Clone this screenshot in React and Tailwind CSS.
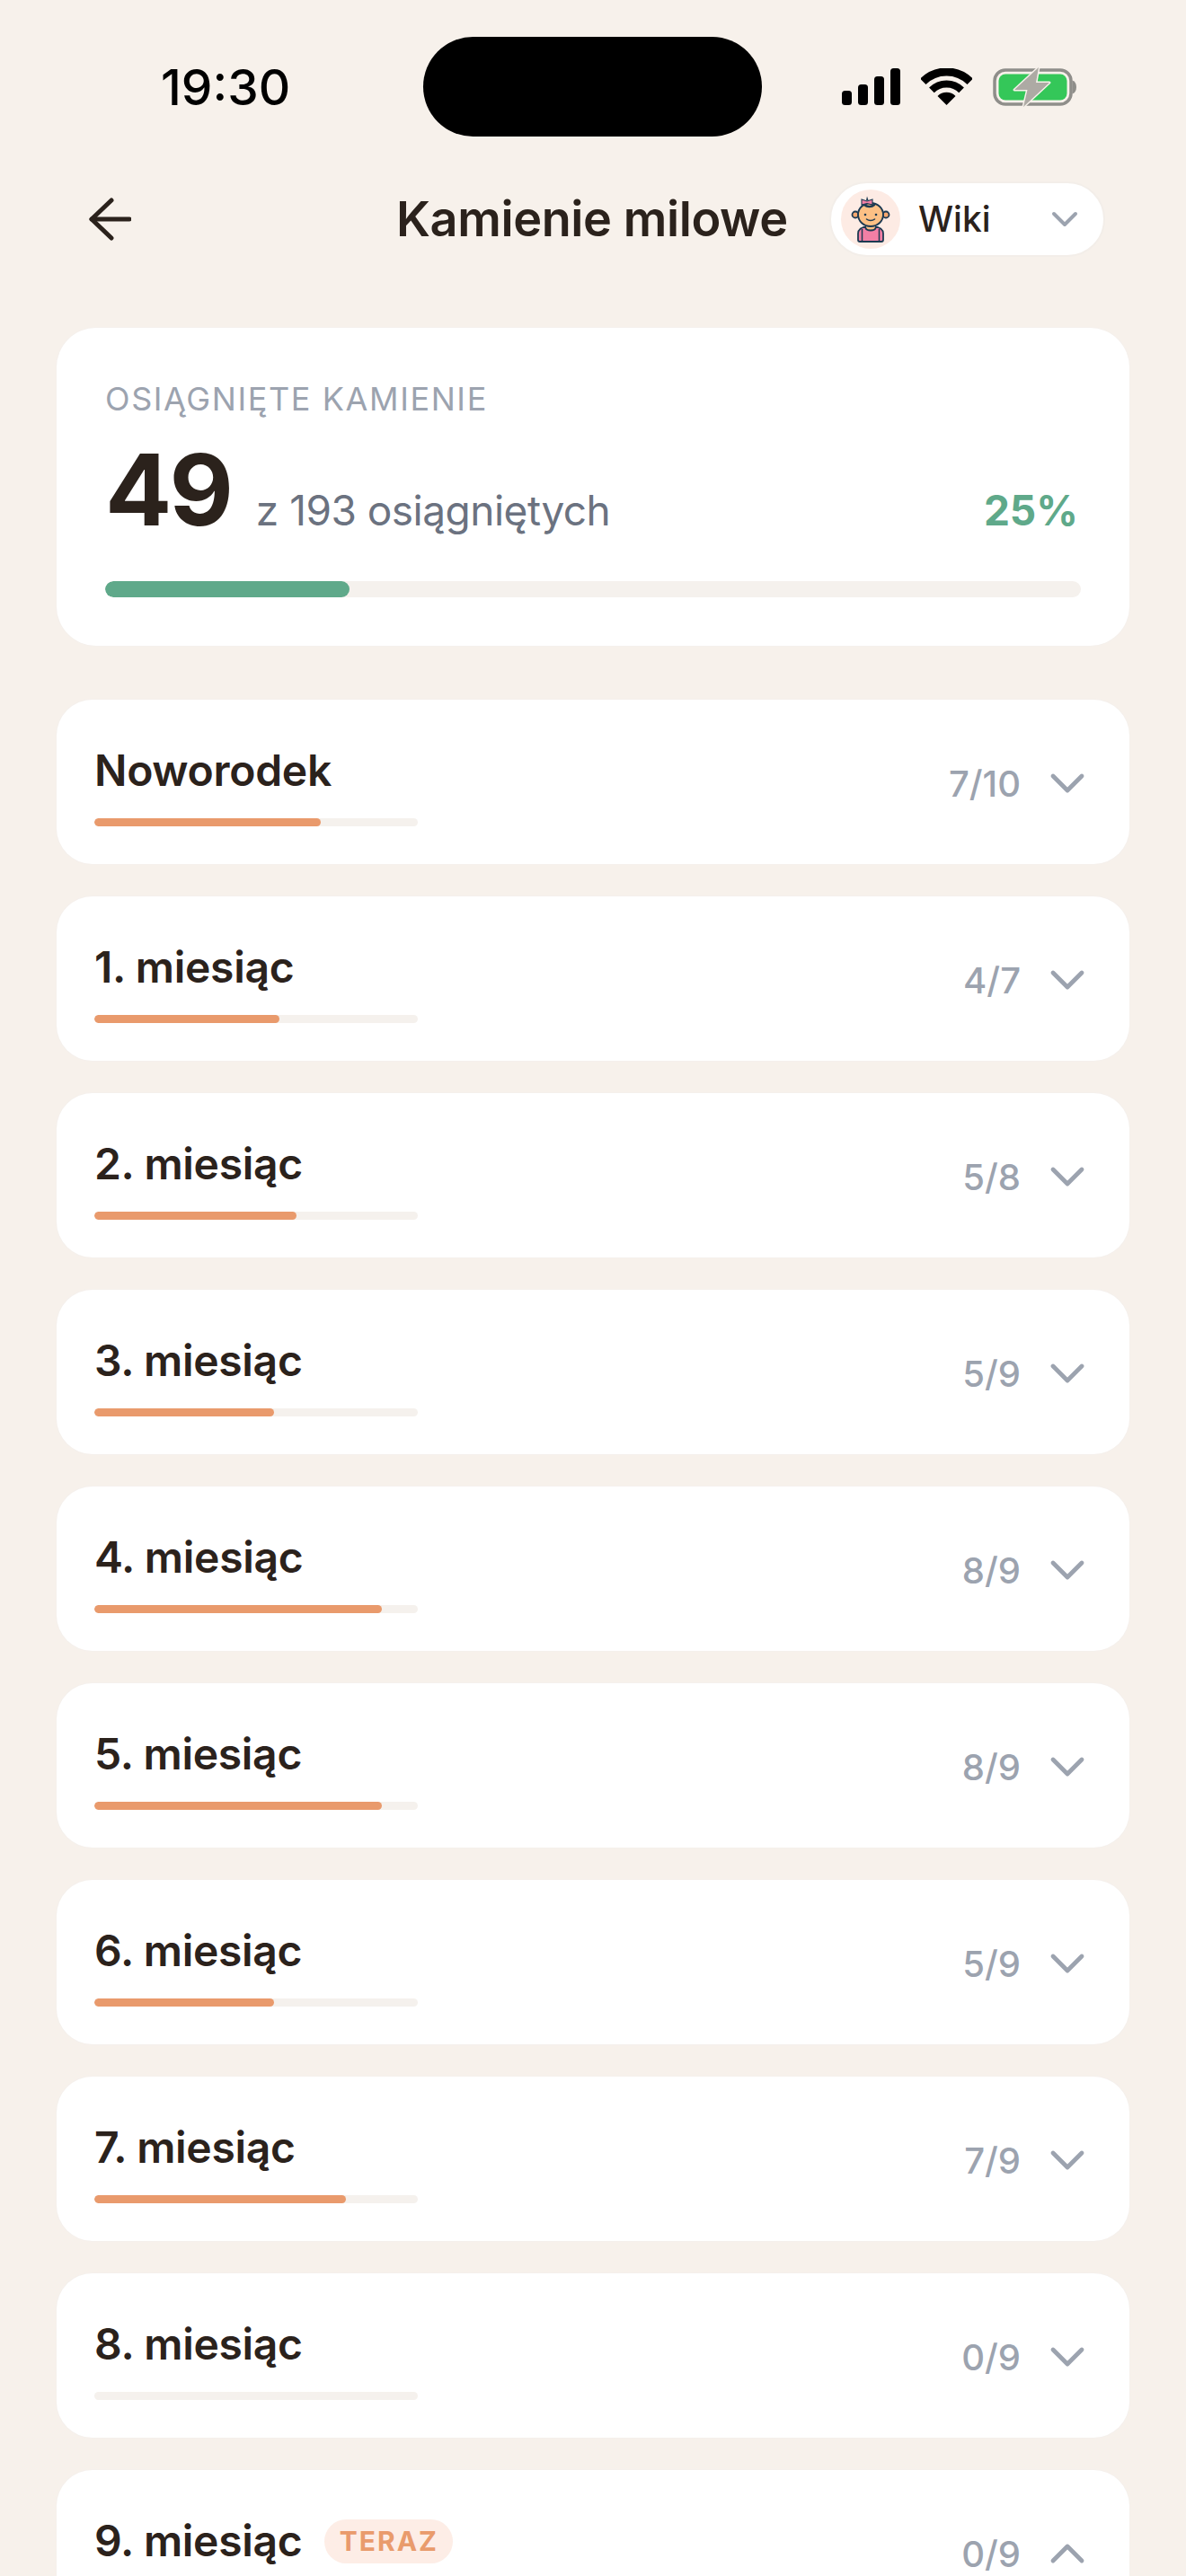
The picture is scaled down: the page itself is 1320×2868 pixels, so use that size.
import { ChevronDown, ChevronUp } from 'lucide-react';

const rows = [
    { title: 'Noworodek', done: 7, total: 10 },
    { title: '1. miesiąc', done: 4, total: 7 },
    { title: '2. miesiąc', done: 5, total: 8 },
    { title: '3. miesiąc', done: 5, total: 9 },
    { title: '4. miesiąc', done: 8, total: 9 },
    { title: '5. miesiąc', done: 8, total: 9 },
    { title: '6. miesiąc', done: 5, total: 9 },
    { title: '7. miesiąc', done: 7, total: 9 },
    { title: '8. miesiąc', done: 0, total: 9 },
    { title: '9. miesiąc', done: 0, total: 9, now: true },
];

function StatusIcons() {
    return (
        <div className="flex items-center ml-[89px] text-black">
            <svg width="65" height="41" viewBox="0 0 65 41" fill="currentColor">
                <rect x="0" y="25" width="11" height="16" rx="3.5" />
                <rect x="18" y="18" width="11" height="23" rx="3.5" />
                <rect x="36" y="9" width="11" height="32" rx="3.5" />
                <rect x="54" y="0" width="11" height="41" rx="3.5" />
            </svg>
            <svg className="ml-[23px]" width="57" height="42" viewBox="0 0 57 42" fill="none">
                <path d="M2.3 14.8A37 37 0 0 1 54.7 14.8" stroke="currentColor" strokeWidth="9" />
                <path d="M11.9 24.4A23.5 23.5 0 0 1 45.1 24.4" stroke="currentColor" strokeWidth="8" />
                <path d="M28.5 41L18.5 31A14 14 0 0 1 38.5 31Z" fill="currentColor" />
            </svg>
            <svg className="ml-[23px] overflow-visible" width="93" height="44" viewBox="0 0 93 44" fill="none">
                <rect x="2" y="3" width="85" height="38" rx="12" stroke="#8f8e8a" strokeWidth="3.5" />
                <rect x="6.5" y="7.5" width="76" height="29" rx="7.5" fill="#34c759" />
                <path d="M88.5 14.5c3 1 4.5 4 4.5 7.5s-1.500 6.500-4.500 7.500z" fill="#8f8e8a" />
                <path
                    d="M51 0L24 25H38.500L34 44L63 17H48Z"
                    fill="#adaaa4"
                    stroke="#f7f1eb"
                    strokeWidth="3"
                    strokeLinejoin="round"
                    paintOrder="stroke"
                />
            </svg>
        </div>
    );
}

function BabyAvatar() {
    return (
        <svg width="66" height="66" viewBox="0 0 66 66" fill="none" className="shrink-0">
            <circle cx="33" cy="33" r="33" fill="#fdebe4" />
            <path d="M19 56V49c0-4 3-6 6-7h16c3 1 6 3 6 7v7a2 2 0 0 1-2 2H21a2 2 0 0 1-2-2Z" fill="#f27fa5" stroke="#1d3a52" strokeWidth="1.800" />
            <path d="M27 41c0 3 2.500 4.500 6 4.500s6-1.500 6-4.500" fill="#fcc085" stroke="#1d3a52" strokeWidth="1.800" />
            <path d="M23.500 44v14M42.500 44v14" stroke="#1d3a52" strokeWidth="1.500" />
            <circle cx="16" cy="28" r="3.500" fill="#f6a86f" stroke="#1d3a52" strokeWidth="1.800" />
            <circle cx="50" cy="28" r="3.500" fill="#f6a86f" stroke="#1d3a52" strokeWidth="1.800" />
            <ellipse cx="33" cy="28" rx="14" ry="13" fill="#fcc085" stroke="#1d3a52" strokeWidth="1.900" />
            <path d="M26 17c3 2.500 8 3 11 0" stroke="#1d3a52" strokeWidth="2.500" strokeLinecap="round" />
            <path d="M23 11l6 2 6-2v6l-6-1.500-6 1.500z" fill="#f27fa5" stroke="#1d3a52" strokeWidth="1.100" />
            <path d="M28 12l1-4.500 1.500 4.500z" fill="#1d3a52" />
            <circle cx="27" cy="28" r="1.300" fill="#1d3a52" />
            <circle cx="39" cy="28" r="1.300" fill="#1d3a52" />
            <path d="M28.500 33c2.500 2 6.500 2 9 0" stroke="#1d3a52" strokeWidth="1.600" strokeLinecap="round" />
        </svg>
    );
}

function Row({ title, done, total, now }) {
    const Chevron = now ? ChevronUp : ChevronDown;
    return (
        <div className="bg-white rounded-[40px] h-[183px] shrink-0 flex justify-between pl-[42px] pr-[37px] shadow-[0_0_0_1px_#f5f0ec]">
            <div className="pt-[50px]">
                <div className="flex items-center h-[58px] gap-[25px]">
                    <span className="text-[48px] leading-[58px] font-semibold text-[#2b221c] tracking-[-0.3px]">{title}</span>
                    {now && (
                        <span className="h-[49px] w-[143px] rounded-full bg-[#fdede6] flex items-center justify-center text-[30px] font-bold tracking-[2px] text-[#e99b6c]">
                            TERAZ
                        </span>
                    )}
                </div>
                <div className="mt-[24px] w-[360px] h-[9px] rounded-full bg-[#f5f1ed] overflow-hidden">
                    <div className="h-full rounded-full bg-[#e99a6c]" style={{ width: `${(done / total) * 100}%` }} />
                </div>
            </div>
            <div className="flex items-center gap-[20px] pt-[2px]">
                <span className="mt-[2px] text-[40px] font-medium text-[#9ca3af]">{done}/{total}</span>
                <Chevron strokeWidth={1.8} className="w-16 h-16 text-[#9ca3af]" />
            </div>
        </div>
    );
}

export default function App() {
    return (
        <div className="h-[2868px] overflow-hidden bg-[#f7f1eb] font-['Inter',sans-serif]">
            <div className="flex items-center pt-[41px]">
                <div className="w-[471px] pl-[179px] text-[55px] leading-[60px] font-medium text-black">19:30</div>
                <div className="w-[377px] h-[111px] rounded-full bg-black" />
                <StatusIcons />
            </div>

            <div className="flex items-center mt-[50px] h-[84px] pl-[99px]">
                <svg width="47" height="48" viewBox="0 0 47 48" fill="none" stroke="#2b221c" strokeWidth="5" strokeLinecap="round" strokeLinejoin="round" className="shrink-0">
                    <path d="M45 24H3" />
                    <path d="M25 3L3 24L25 45" />
                </svg>
                <h1 className="ml-[295px] w-[436px] shrink-0 text-[54px] leading-[64px] font-semibold tracking-[-0.4px] text-[#2b221c] whitespace-nowrap">Kamienie milowe</h1>
                <div className="ml-[46px] w-[307px] h-[84px] shrink-0 rounded-full bg-white border-2 border-[#f3eee9] flex items-center pl-[11px]">
                    <BabyAvatar />
                    <span className="ml-[20px] text-[39px] font-medium text-[#2b221c]">Wiki</span>
                    <ChevronDown className="ml-auto mr-[19px] w-12 h-12 text-[#9ca3af]" />
                </div>
            </div>

            <div className="px-[63px] mt-[79px] flex flex-col">
                <div className="bg-white rounded-[44px] h-[354px] px-[54px] pt-[57px] shadow-[0_0_0_1px_#f5f0ec]">
                    <div className="text-[36px] leading-[44px] tracking-[1.6px] text-[#9ca3af]">OSIĄGNIĘTE KAMIENIE</div>
                    <div className="flex items-baseline justify-between mt-[24px] pr-[3px]">
                        <div className="flex items-baseline gap-[28px]">
                            <span className="text-[110px] leading-[110px] font-bold tracking-[-3px] text-[#2b221c]">49</span>
                            <span className="text-[46px] leading-[46px] tracking-[-0.5px] text-[#6b7280]">z 193 osiągniętych</span>
                        </div>
                        <span className="text-[46px] leading-[46px] font-bold text-[#5fa98a]">25%</span>
                    </div>
                    <div className="mt-[47px] h-[18px] rounded-full bg-[#f5f1ed] overflow-hidden">
                        <div className="h-full rounded-full bg-[#5fa98a]" style={{ width: '25%' }} />
                    </div>
                </div>

                <div className="mt-[60px] flex flex-col gap-[36px]">
                    {rows.map((r) => (
                        <Row key={r.title} {...r} />
                    ))}
                </div>
            </div>
        </div>
    );
}
